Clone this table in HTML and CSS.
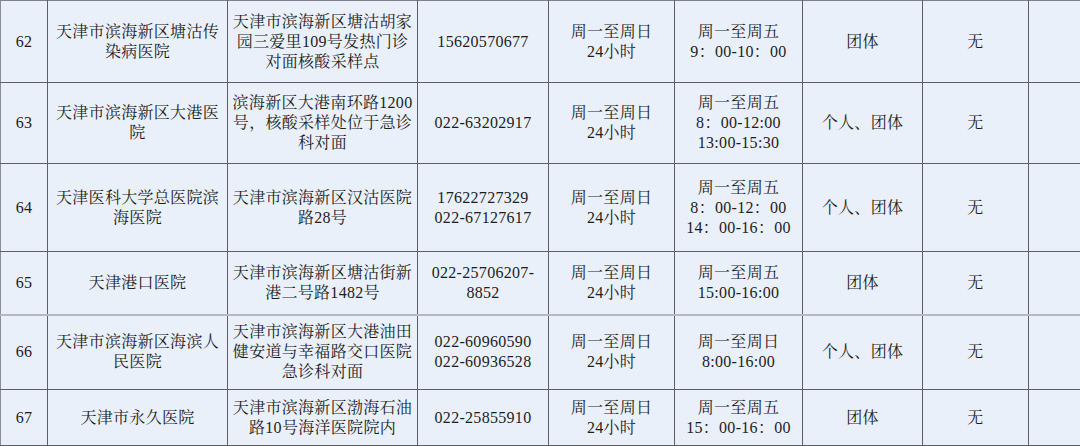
FILE: index.html
```html
<!DOCTYPE html>
<html lang="zh-CN">
<head>
<meta charset="utf-8">
<title>核酸采样点</title>
<link rel="stylesheet" href="styles.css">
</head>
<body>
<table class="sites">
  <colgroup>
    <col class="c-no"><col class="c-name"><col class="c-addr"><col class="c-tel"><col class="c-hours"><col class="c-time"><col class="c-type"><col class="c-fee"><col class="c-extra">
  </colgroup>
  <tbody>
    <tr class="r62">
      <td>62</td>
      <td>天津市滨海新区塘沽传<br>染病医院</td>
      <td>天津市滨海新区塘沽胡家<br>园三爱里109号发热门诊<br>对面核酸采样点</td>
      <td>15620570677</td>
      <td>周一至周日<br>24小时</td>
      <td>周一至周五<br>9：00-10：00</td>
      <td>团体</td>
      <td>无</td>
      <td></td>
    </tr>
    <tr class="r63">
      <td>63</td>
      <td>天津市滨海新区大港医<br>院</td>
      <td>滨海新区大港南环路1200<br>号，核酸采样处位于急诊<br>科对面</td>
      <td>022-63202917</td>
      <td>周一至周日<br>24小时</td>
      <td>周一至周五<br>8：00-12:00<br>13:00-15:30</td>
      <td>个人、团体</td>
      <td>无</td>
      <td></td>
    </tr>
    <tr class="r64">
      <td>64</td>
      <td>天津医科大学总医院滨<br>海医院</td>
      <td>天津市滨海新区汉沽医院<br>路28号</td>
      <td>17622727329<br>022-67127617</td>
      <td>周一至周日<br>24小时</td>
      <td>周一至周五<br>8：00-12：00<br>14：00-16：00</td>
      <td>个人、团体</td>
      <td>无</td>
      <td></td>
    </tr>
    <tr class="r65">
      <td>65</td>
      <td>天津港口医院</td>
      <td>天津市滨海新区塘沽街新<br>港二号路1482号</td>
      <td>022-25706207-<br>8852</td>
      <td>周一至周日<br>24小时</td>
      <td>周一至周五<br>15:00-16:00</td>
      <td>团体</td>
      <td>无</td>
      <td></td>
    </tr>
    <tr class="r66">
      <td>66</td>
      <td>天津市滨海新区海滨人<br>民医院</td>
      <td>天津市滨海新区大港油田<br>健安道与幸福路交口医院<br>急诊科对面</td>
      <td>022-60960590<br>022-60936528</td>
      <td>周一至周日<br>24小时</td>
      <td>周一至周日<br>8:00-16:00</td>
      <td>个人、团体</td>
      <td>无</td>
      <td></td>
    </tr>
    <tr class="r67">
      <td>67</td>
      <td>天津市永久医院</td>
      <td>天津市滨海新区渤海石油<br>路10号海洋医院院内</td>
      <td>022-25855910</td>
      <td>周一至周日<br>24小时</td>
      <td>周一至周五<br>15：00-16：00</td>
      <td>团体</td>
      <td>无</td>
      <td></td>
    </tr>
  </tbody>
</table>
</body>
</html>
```
FILE: styles.css
```css
html, body {
  margin: 0;
  padding: 0;
  background: #e9f0f9;
  overflow: hidden;
}

.sites {
  border-collapse: collapse;
  table-layout: fixed;
  width: 1100px;
  font-family: "Liberation Serif", "Noto Serif CJK SC", "Noto Sans CJK SC", serif;
  font-size: 16px;
  line-height: 20px;
  letter-spacing: 0.3px;
  color: #1e1e1e;
  background: #e9f0f9;
}

.sites td {
  border: 1px solid #5b6068;
  padding: 0;
  text-align: center;
  vertical-align: middle;
  white-space: nowrap;
}

.sites tr:first-child td {
  border-top-color: #7d828a;
}

.sites td:first-child {
  border-left-color: #8a8f97;
}

.c-no { width: 47px; }
.c-name { width: 180px; }
.c-addr { width: 190px; }
.c-tel { width: 131px; }
.c-hours { width: 126px; }
.c-time { width: 128px; }
.c-type { width: 120px; }
.c-fee { width: 106px; }
.c-extra { width: 72px; }

.r62 { height: 82px; }
.r63 { height: 81px; }
.r64 { height: 88px; }
.r65 { height: 63px; }
.r66 { height: 75px; }
.r67 { height: 56px; }

.r66 td {
  border-top: 2px solid #b3b8c1;
}
```
